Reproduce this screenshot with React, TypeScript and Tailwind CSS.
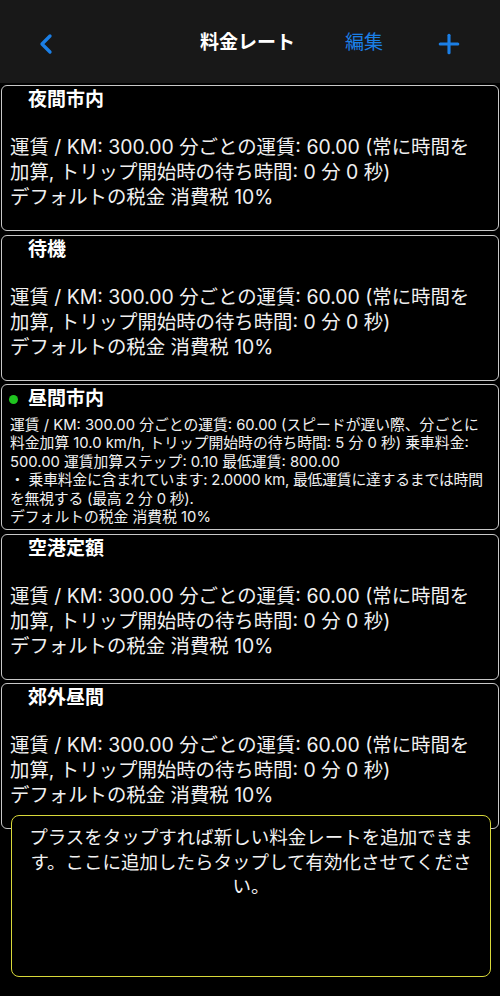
import { ChevronLeft, Plus } from "lucide-react";

const font = {
  fontFamily: 'Inter, "Noto Sans CJK JP", "Noto Sans", sans-serif',
};

type Rate = {
  name: string;
  active?: boolean;
  lines: string[];
};

const simpleLines = [
  "運賃 / KM: 300.00 分ごとの運賃: 60.00 (常に時間を加算, トリップ開始時の待ち時間: 0 分 0 秒)",
  "デフォルトの税金 消費税 10%",
];

const rates: Rate[] = [
  { name: "夜間市内", lines: simpleLines },
  { name: "待機", lines: simpleLines },
  {
    name: "昼間市内",
    active: true,
    lines: [
      "運賃 / KM: 300.00 分ごとの運賃: 60.00 (スピードが遅い際、分ごとに料金加算 10.0 km/h, トリップ開始時の待ち時間: 5 分 0 秒) 乗車料金: 500.00 運賃加算ステップ: 0.10 最低運賃: 800.00",
      "・ 乗車料金に含まれています: 2.0000 km, 最低運賃に達するまでは時間を無視する (最高 2 分 0 秒).",
      "デフォルトの税金 消費税 10%",
    ],
  },
  { name: "空港定額", lines: simpleLines },
  { name: "郊外昼間", lines: simpleLines },
];

function RateCard({ rate }: { rate: Rate }) {
  return (
    <div className="h-[146px] mx-[1px] rounded-[6px] border border-[#c8c8c8] bg-black overflow-hidden">
      <div className="relative pt-[2px] pl-[26px] text-[19px] leading-[24px] font-bold text-white">
        {rate.active && (
          <span className="absolute left-[7px] top-[10px] w-[9px] h-[9px] rounded-full bg-[#1fc41f]" />
        )}
        {rate.name}
      </div>
      {rate.active ? (
        <div className="mt-[5px] pl-[8px] pr-[10px] text-[14.8px] leading-[18.4px] text-[#f0f0f0]">
          {rate.lines.map((l) => (
            <div key={l} className={l.startsWith("・") ? "tracking-[-0.2px]" : ""}>
              {l}
            </div>
          ))}
        </div>
      ) : (
        <div className="mt-[23px] pl-[8px] pr-[10px] text-[19.4px] leading-[25px] text-[#f0f0f0]">
          {rate.lines.map((l) => (
            <div key={l}>{l}</div>
          ))}
        </div>
      )}
    </div>
  );
}

export default function App() {
  return (
    <div className="relative w-[500px] h-[996px] bg-black overflow-hidden" style={font}>
      <header className="h-[83px] bg-[#181818] flex items-center pl-[30px] pt-[4px]">
        <button className="text-[#1b7fe6]" aria-label="Back">
          <ChevronLeft className="w-[32px] h-[32px]" strokeWidth={2.5} />
        </button>
        <h1 className="ml-[138px] text-[19px] font-bold text-white">料金レート</h1>
        <button className="ml-[50px] text-[19px] text-[#1b7fe6]">編集</button>
        <button className="ml-[51px] text-[#1b7fe6]" aria-label="Add">
          <Plus className="w-[30px] h-[30px]" strokeWidth={2.5} />
        </button>
      </header>

      <div className="pt-[2px] flex flex-col gap-[3.5px]">
        {rates.map((r) => (
          <RateCard key={r.name} rate={r} />
        ))}
      </div>

      <div className="absolute left-[11px] top-[815px] w-[480px] h-[162px] rounded-[8px] border border-[#d8d83a] bg-black px-[14px] pt-[9px] text-center text-[18.5px] leading-[24.5px] text-[#f2f2f2]">
        プラスをタップすれば新しい料金レートを追加できます。ここに追加したらタップして有効化させてください。
      </div>
    </div>
  );
}
